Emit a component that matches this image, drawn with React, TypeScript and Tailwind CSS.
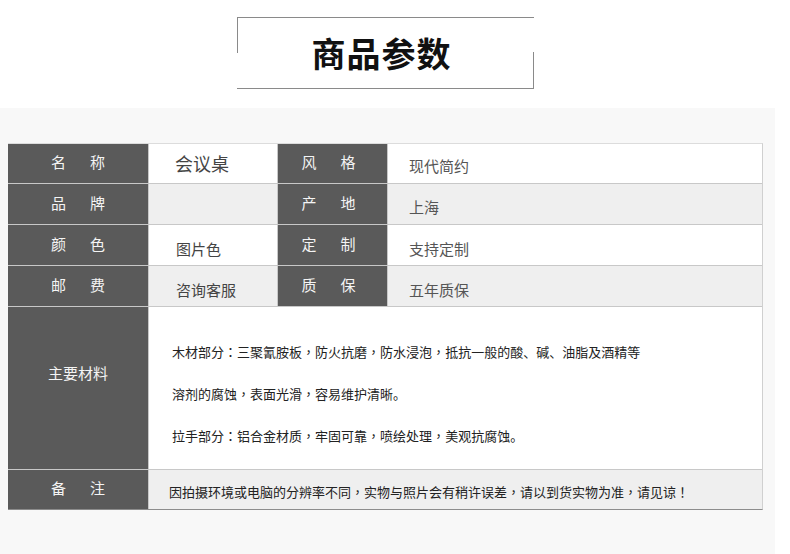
import React from "react";

const FONT = { fontFamily: '"Noto Sans CJK SC", "Noto Sans", sans-serif' };

function Punct({ text }: { text: string }) {
  const parts = text.split(/([，：！])/);
  return (
    <>
      {parts.map((p, i) =>
        p === "，" || p === "：" || p === "！" ? (
          <span key={i} style={{ fontFamily: '"Noto Sans CJK TC", sans-serif' }}>
            {p}
          </span>
        ) : (
          <React.Fragment key={i}>{p}</React.Fragment>
        )
      )}
    </>
  );
}

function Label({ a, b, className = "" }: { a: string; b: string; className?: string }) {
  return (
    <div className={`flex items-center justify-center gap-[24px] bg-[#5a5a5a] pb-[2px] text-[15px] text-[#f4f4f4] ${className}`}>
      <span>{a}</span>
      <span>{b}</span>
    </div>
  );
}

function Val({ text, bg, className = "" }: { text: string; bg: string; className?: string }) {
  return (
    <div className={`flex items-center ${bg} ${className}`}>
      <span>{text}</span>
    </div>
  );
}

export default function App() {
  return (
    <div className="h-[554px] w-[790px] overflow-hidden bg-white" style={FONT}>
      <div className="flex h-[108px] justify-start pl-[237px] pt-[17px]">
        <div className="relative flex h-[72px] w-[297px] items-center justify-center border-y border-[#8a8a8a]">
          <div className="absolute left-0 top-0 h-[35px] w-px bg-[#8a8a8a]" />
          <div className="absolute bottom-0 right-0 h-[36px] w-px bg-[#8a8a8a]" />
          <span className="mr-[8px] text-[34px] font-bold leading-none tracking-[1px] text-[#111]">商品参数</span>
        </div>
      </div>
      <div className="h-[446px] w-[775px] bg-[#f8f8f8] pl-[8px] pt-[35px]">
        <div className="grid w-[755px] grid-cols-[140px_128px_109px_1fr] grid-rows-[39px_40px_40px_40px_162px_39px] gap-px border-t border-r border-b border-t-[#dcdcdc] border-r-[#d0d0d0] border-b-[#8c8c8c] bg-[#c8c8c8]">
          <Label a="名" b="称" />
          <Val text="会议桌" bg="bg-white" className="pl-[26px] text-[18px] text-[#444]" />
          <Label a="风" b="格" className="pr-[8px]" />
          <Val text="现代简约" bg="bg-white" className="pl-[21px] pt-[6px] text-[15px] text-[#555]" />

          <Label a="品" b="牌" />
          <Val text="" bg="bg-[#efefef]" />
          <Label a="产" b="地" className="pr-[8px]" />
          <Val text="上海" bg="bg-[#efefef]" className="pl-[21px] pt-[6px] text-[15px] text-[#555]" />

          <Label a="颜" b="色" />
          <Val text="图片色" bg="bg-white" className="pl-[27px] pt-[8px] text-[15px] text-[#444]" />
          <Label a="定" b="制" className="pr-[8px]" />
          <Val text="支持定制" bg="bg-white" className="pl-[21px] pt-[8px] text-[15px] text-[#555]" />

          <Label a="邮" b="费" />
          <Val text="咨询客服" bg="bg-[#efefef]" className="pl-[27px] pt-[8px] text-[15px] text-[#444]" />
          <Label a="质" b="保" className="pr-[8px]" />
          <Val text="五年质保" bg="bg-[#efefef]" className="pl-[21px] pt-[8px] text-[15px] text-[#555]" />

          <div className="flex items-center justify-center bg-[#5a5a5a] pb-[30px] text-[15px] text-[#f4f4f4]">主要材料</div>
          <div className="col-span-3 flex flex-col gap-[20px] bg-white pl-[23px] pt-[34px] text-[13px] leading-[22px] text-[#222]">
            <p><Punct text="木材部分：三聚氰胺板，防火抗磨，防水浸泡，抵抗一般的酸、碱、油脂及酒精等" /></p>
            <p><Punct text="溶剂的腐蚀，表面光滑，容易维护清晰。" /></p>
            <p><Punct text="拉手部分：铝合金材质，牢固可靠，喷绘处理，美观抗腐蚀。" /></p>
          </div>

          <Label a="备" b="注" />
          <div className="col-span-3 flex items-center bg-[#efefef] pl-[20px] pt-[5px] text-[13px] text-[#222]">
            <span><Punct text="因拍摄环境或电脑的分辨率不同，实物与照片会有稍许误差，请以到货实物为准，请见谅！" /></span>
          </div>
        </div>
      </div>
    </div>
  );
}
